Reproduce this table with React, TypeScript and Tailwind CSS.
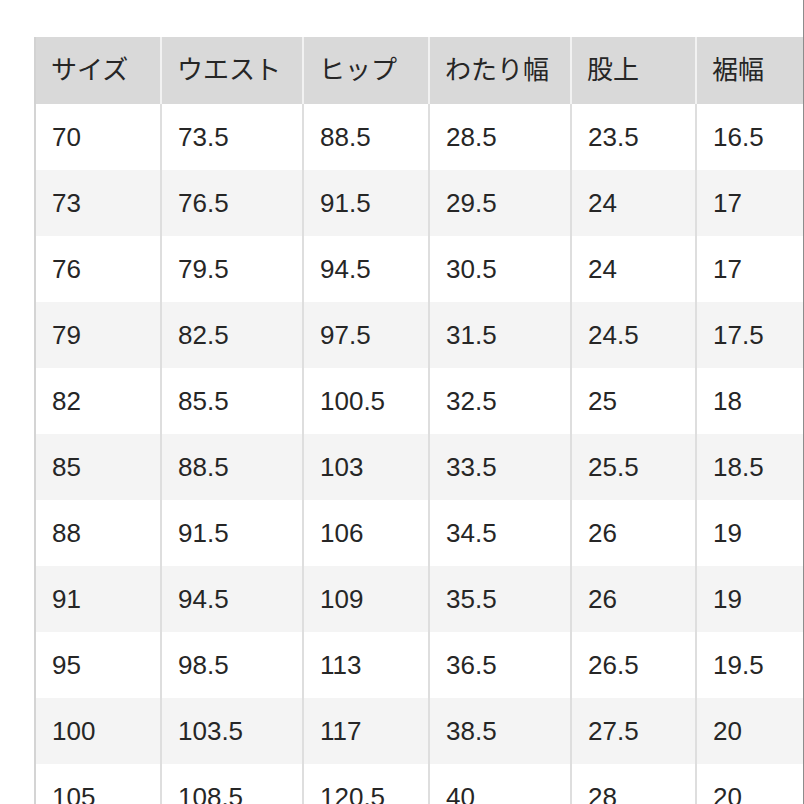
import React from "react";

const headers = ["サイズ", "ウエスト", "ヒップ", "わたり幅", "股上", "裾幅"];
const rows: string[][] = [
  ["70", "73.5", "88.5", "28.5", "23.5", "16.5"],
  ["73", "76.5", "91.5", "29.5", "24", "17"],
  ["76", "79.5", "94.5", "30.5", "24", "17"],
  ["79", "82.5", "97.5", "31.5", "24.5", "17.5"],
  ["82", "85.5", "100.5", "32.5", "25", "18"],
  ["85", "88.5", "103", "33.5", "25.5", "18.5"],
  ["88", "91.5", "106", "34.5", "26", "19"],
  ["91", "94.5", "109", "35.5", "26", "19"],
  ["95", "98.5", "113", "36.5", "26.5", "19.5"],
  ["100", "103.5", "117", "38.5", "27.5", "20"],
  ["105", "108.5", "120.5", "40", "28", "20"],
];

export default function App() {
  return (
    <div
      className="w-[804px] h-[804px] overflow-hidden bg-white border-r border-[#8c8c8c] pl-[34px] pt-[37px] text-[#262626]"
      style={{ fontFamily: '"Liberation Sans", "Noto Sans CJK JP", sans-serif' }}
    >
      <div className="grid grid-cols-[126px_142px_126px_142px_125px_108px]">
        {headers.map((h, i) => (
          <div
            key={h}
            className={`h-[67px] flex items-center pl-[15px] bg-[#d9d9d9] text-[26px] border-l-2 ${
              i === 0 ? "border-[#d2d2d2]" : "border-[#f2f2f2]"
            }`}
          >
            {h}
          </div>
        ))}
        {rows.map((r, ri) =>
          r.map((c, ci) => (
            <div
              key={`${ri}-${ci}`}
              className={`h-[66px] flex items-center pl-[16px] text-[26px] border-l-2 ${
                ci === 0 ? "border-[#d4d4d4]" : "border-[#dedede]"
              } ${ri % 2 === 1 ? "bg-[#f4f4f4]" : "bg-white"}`}
            >
              {c}
            </div>
          ))
        )}
      </div>
    </div>
  );
}
